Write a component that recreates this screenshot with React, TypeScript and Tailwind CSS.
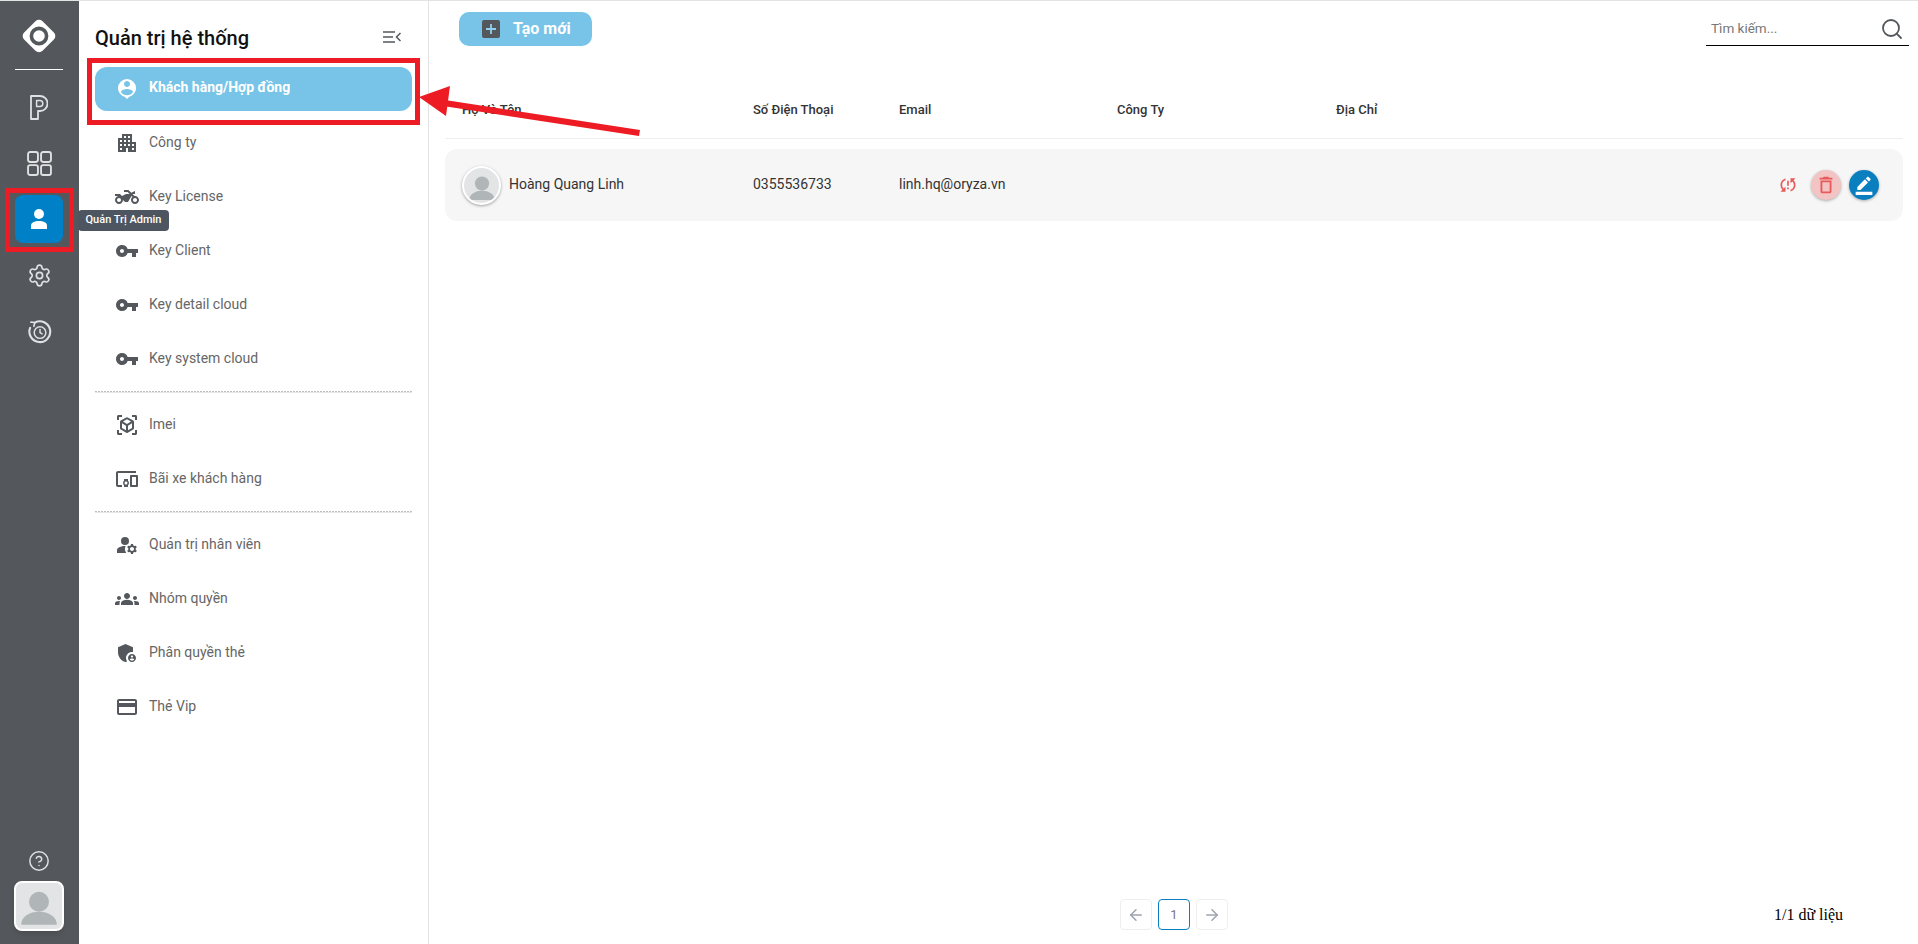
import React from "react";
import { ArrowLeft, ArrowRight, Settings, CircleHelp, Search } from "lucide-react";
import {
  MdPersonPin, MdApartment, MdTwoWheeler, MdVpnKey, MdViewInAr, MdDevicesOther,
  MdManageAccounts, MdGroups, MdAdminPanelSettings, MdCreditCard, MdSyncProblem,
  MdDeleteOutline, MdBorderColor,
} from "react-icons/md";

const Row = ({ icon, label, active }: { icon: React.ReactNode; label: string; active?: boolean }) => (
  <div className="h-[54px] flex items-center">
    <div className={`w-full flex items-center pl-[20px] ${active ? "h-[44px] rounded-[12px] bg-[#77c4e8] text-white font-bold -mt-[1px]" : "text-[#666666]"}`}>
      <div className={`w-[24px] h-[24px] flex items-center justify-center ${active ? "text-white" : "text-[#54585c]"}`}>{icon}</div>
      <span className="ml-[10px] -mt-[3px] text-[14px] leading-[20px]">{label}</span>
    </div>
  </div>
);

const Divider = () => (
  <div className="mt-[5px] mb-[5px] h-[2px] border-b border-[#e5e7eb] bg-[repeating-linear-gradient(90deg,#bdbdbd_0,#bdbdbd_2px,transparent_2px,transparent_3px)]" />
);

const Person = ({ className }: { className?: string }) => (
  <svg viewBox="0 0 40 40" className={className} fill="currentColor">
    <circle cx="20" cy="14" r="9.5" />
    <path d="M3 36c0-8 8-12.5 17-12.5S37 28 37 36z" />
  </svg>
);

export default function App() {
  return (
    <div className="relative w-[1918px] h-[944px] overflow-hidden bg-white border-t border-[#e3e3e3] flex font-['Roboto',sans-serif]">
      {/* icon rail */}
      <aside className="w-[79px] shrink-0 bg-[#54585c] flex flex-col items-center pr-[1px] text-[#dfe1e3]">
        <svg viewBox="0 0 36 36" className="w-[36px] h-[36px] mt-[17px]">
          <rect x="5" y="5" width="26" height="26" rx="5" transform="rotate(45 18 18)" fill="#fff" />
          <circle cx="18" cy="18" r="7.6" fill="none" stroke="#54585c" strokeWidth="3.6" />
        </svg>
        <div className="w-[48px] h-px bg-white mt-[15px]" />
        <svg viewBox="0 0 18 25" className="w-[18px] h-[25px] mt-[25px]" fill="none" stroke="currentColor" strokeWidth="1.8" strokeLinejoin="round">
          <path d="M1 24V1h9a7.5 7.5 0 0 1 0 15H8v8z" />
          <path d="M6.6 11.5V5.5h3.2a3 3 0 0 1 0 6z" strokeWidth="1.5" />
        </svg>
        <svg viewBox="0 0 24 24" className="w-[25px] h-[25px] mt-[31px]" fill="none" stroke="currentColor" strokeWidth="1.8">
          <rect x="1" y="1" width="9.5" height="9.5" rx="2" />
          <rect x="13.5" y="1" width="9.5" height="9.5" rx="2" />
          <rect x="1" y="13.5" width="9.5" height="9.5" rx="2" />
          <rect x="13.5" y="13.5" width="9.5" height="9.5" rx="2" />
        </svg>
        <div className="w-[48px] h-[48px] mt-[19px] rounded-[8px] bg-[#0080c6] flex items-center justify-center text-white">
          <svg viewBox="0 0 16 20" className="w-[16px] h-[20px]" fill="currentColor">
            <circle cx="8" cy="5" r="5" />
            <path d="M0 20v-3.5C0 13.5 3.5 12 8 12s8 1.5 8 4.5V20z" />
          </svg>
        </div>
        <Settings className="w-[25px] h-[25px] mt-[20px]" strokeWidth={1.6} />
        <svg viewBox="0 0 24 24" className="w-[25px] h-[25px] mt-[31px]" fill="none" stroke="currentColor" strokeWidth="2" strokeLinecap="round" strokeLinejoin="round">
          <path d="M7.5 3.4A10 10 0 1 1 3 8.5" />
          <path d="M3.8 3 7.5 3.4 6.6 7" strokeWidth="1.6" />
          <circle cx="12.5" cy="13" r="5.6" strokeWidth="1.4" />
          <path d="M12.5 10v3l2 1.3" strokeWidth="1.4" />
        </svg>
        <div className="flex-1" />
        <CircleHelp className="w-[22px] h-[22px]" strokeWidth={1.6} />
        <div className="w-[50px] h-[50px] mt-[9px] mb-[13px] rounded-[8px] bg-[#e2e4e6] border-2 border-white text-[#b0b6b8] flex items-end justify-center overflow-hidden shadow-md">
          <Person className="w-[42px] h-[42px]" />
        </div>
      </aside>

      {/* menu */}
      <aside className="w-[350px] shrink-0 border-r border-[#e3e3e3] pl-[16px] pr-[16px]">
        <div className="h-[61px] flex items-start justify-between pr-[11px]">
          <h1 className="text-[20px] font-medium text-[#111] mt-[25px] leading-[24px]">Quản trị hệ thống</h1>
          <svg viewBox="0 0 18 12" className="w-[18px] h-[12px] mt-[30px]" fill="none" stroke="#54585c" strokeWidth="1.5">
            <path d="M0 1h12M0 6h10M0 11h12M17.5 2 13.5 6l4 4" />
          </svg>
        </div>
        <Row active icon={<MdPersonPin size={24} />} label="Khách hàng/Hợp đồng" />
        <Row icon={<MdApartment size={24} />} label="Công ty" />
        <Row icon={<MdTwoWheeler size={26} />} label="Key License" />
        <Row icon={<MdVpnKey size={24} />} label="Key Client" />
        <Row icon={<MdVpnKey size={24} />} label="Key detail cloud" />
        <Row icon={<MdVpnKey size={24} />} label="Key system cloud" />
        <Divider />
        <Row icon={<MdViewInAr size={24} />} label="Imei" />
        <Row icon={<MdDevicesOther size={24} />} label="Bãi xe khách hàng" />
        <Divider />
        <Row icon={<MdManageAccounts size={24} />} label="Quản trị nhân viên" />
        <Row icon={<MdGroups size={24} />} label="Nhóm quyền" />
        <Row icon={<MdAdminPanelSettings size={24} />} label="Phân quyền thẻ" />
        <Row icon={<MdCreditCard size={24} />} label="Thẻ Vip" />
      </aside>

      {/* content */}
      <main className="flex-1 min-w-0 flex flex-col pl-[16px] pr-[15px]">
        <div className="h-[92px] shrink-0 flex items-start justify-between">
          <div className="ml-[14px] mt-[11px] w-[133px] h-[34px] rounded-[10px] bg-[#77c4e8] flex items-center pl-[23px] text-white text-[16px] font-bold">
            <span className="w-[18px] h-[18px] rounded-[2px] bg-[#54585c] flex items-center justify-center">
              <svg viewBox="0 0 12 12" className="w-[12px] h-[12px]" stroke="#8fd0ee" strokeWidth="1.8"><path d="M6 1v10M1 6h10" /></svg>
            </span>
            <span className="ml-[13px]">Tạo mới</span>
          </div>
          <div className="-mr-[6px] mt-[11px] w-[203px] h-[34px] border-b border-black flex items-center justify-between pl-[5px] pr-[5px]">
            <span className="text-[13.5px] text-[#777]">Tìm kiếm...</span>
            <Search className="w-[24px] h-[24px] text-[#54585c]" strokeWidth={1.8} />
          </div>
        </div>
        <div className="grid grid-cols-[308px_146px_218px_219px_1fr] h-[46px] border-b border-[#eeeeee] text-[13px] font-medium text-[#333] pb-[11px] items-center">
          <span className="pl-[17px]">Họ Và Tên</span>
          <span>Số Điện Thoại</span>
          <span>Email</span>
          <span>Công Ty</span>
          <span>Địa Chỉ</span>
        </div>
        <div className="mt-[10px] h-[72px] rounded-[12px] bg-[#f6f6f6] grid grid-cols-[308px_146px_218px_219px_1fr] items-center text-[14px] text-[#333]">
          <div className="pl-[17px] flex items-center">
            <div className="w-[39px] h-[39px] rounded-full bg-[#e2e4e6] border-2 border-white shadow-[0_1px_3px_rgba(0,0,0,0.35)] text-[#b0b6b8] flex items-end justify-center overflow-hidden">
              <Person className="w-[30px] h-[30px]" />
            </div>
            <span className="ml-[8px] -mt-[2px]">Hoàng Quang Linh</span>
          </div>
          <span className="-mt-[2px]">0355536733</span>
          <span className="-mt-[2px]">linh.hq@oryza.vn</span>
          <span />
          <div className="flex items-center justify-end pr-[24px]">
            <MdSyncProblem size={20} className="text-[#e85a5a]" />
            <div className="ml-[13px] w-[30px] h-[30px] rounded-full bg-[#f2c4c4] shadow-[0_1px_3px_rgba(0,0,0,0.3)] flex items-center justify-center text-[#e85a5a]">
              <MdDeleteOutline size={22} />
            </div>
            <div className="ml-[8px] w-[30px] h-[30px] rounded-full bg-[#0a7fc0] shadow-[0_1px_3px_rgba(0,0,0,0.3)] flex items-center justify-center text-white">
              <MdBorderColor size={20} />
            </div>
          </div>
        </div>
        <div className="flex-1" />
        <div className="relative h-[31px] mb-[14px] flex items-center">
          <div className="ml-[675px] flex gap-[6px] text-[#9ca3af]">
            <div className="w-[32px] h-[31px] rounded-[4px] border border-[#eeeeee] flex items-center justify-center"><ArrowLeft size={18} /></div>
            <div className="w-[32px] h-[31px] rounded-[4px] border border-[#0a7fc0] flex items-center justify-center text-[13px] text-[#777]">1</div>
            <div className="w-[32px] h-[31px] rounded-[4px] border border-[#eeeeee] flex items-center justify-center"><ArrowRight size={18} /></div>
          </div>
          <span className="ml-[546px] font-['Liberation_Serif',serif] text-[16px] text-black">1/1 dữ liệu</span>
        </div>
      </main>

      {/* tooltip */}
      <div className="absolute left-[78px] top-[209px] w-[91px] h-[21px] rounded-[4px] bg-[#4d5560] text-white text-[11px] font-medium flex items-center justify-center">Quản Trị Admin</div>

      {/* red annotations */}
      <div className="absolute left-[5px] top-[187px] w-[69px] h-[64px] border-[5px] border-[#ed1c24]" />
      <div className="absolute left-[87px] top-[57px] w-[333px] h-[67px] border-[5px] border-[#ed1c24]" />
      <svg className="absolute left-[415px] top-[80px] w-[230px] h-[60px]" viewBox="0 0 230 60">
        <path d="M4 16 35 5 31 35z" fill="#ed1c24" />
        <path d="M30 19 225 49l-1 6L28 25z" fill="#ed1c24" />
      </svg>
    </div>
  );
}
